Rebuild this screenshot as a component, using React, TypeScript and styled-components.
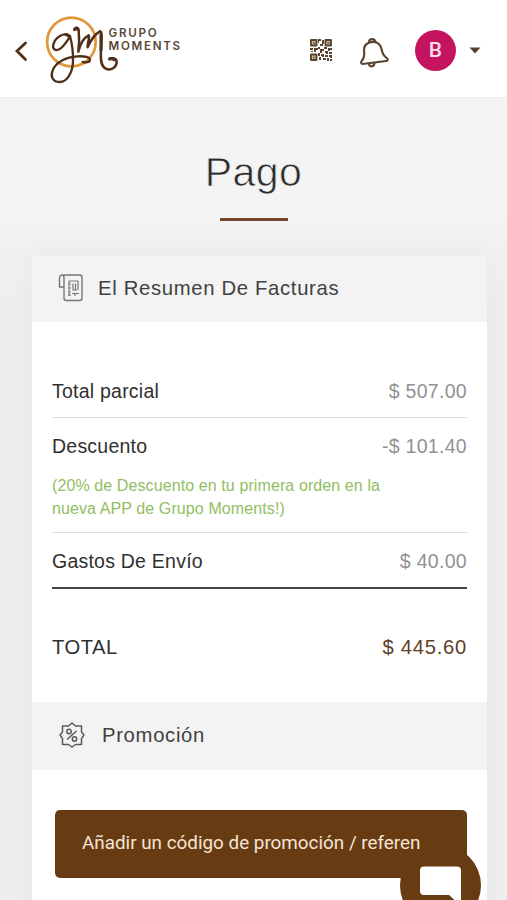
import React from 'react';
import styled, { createGlobalStyle } from 'styled-components';

const Global = createGlobalStyle`
  * { box-sizing: border-box; }
  html, body { margin: 0; height: 900px; overflow: hidden; }
  body { background: #eeeeee; font-family: "Liberation Sans", Arial, sans-serif; }
`;

const Page = styled.div`
  width: 507px;
  height: 900px;
  overflow: hidden;
  display: flex;
  flex-direction: column;
  background: linear-gradient(#f4f4f4 97px, #f4f4f4 215px, #f0f0f0 250px, #eeeeee 300px);
`;

const Header = styled.header`
  height: 97px;
  flex: none;
  background: #fff;
  box-shadow: 0 0 3px rgba(0, 0, 0, 0.06);
  display: flex;
  align-items: flex-start;
`;

const BackIcon = styled.svg`
  width: 14px;
  height: 22px;
  margin: 40px 0 0 14px;
`;

const Brand = styled.div`
  display: flex;
  margin: 12px 0 0 14px;
`;

const BrandMark = styled.svg`
  width: 78px;
  height: 76px;
`;

const BrandName = styled.div`
  display: flex;
  flex-direction: column;
  margin: 15px 0 0 -11.5px;
  font: 600 11.6px/13px Inter, sans-serif;
  color: #584638;
`;

const BrandWord = styled.span<{ $spacing: number }>`
  letter-spacing: ${(p) => p.$spacing}px;
`;

const Actions = styled.div`
  display: flex;
  align-items: flex-start;
  margin: 30px 26px 0 auto;
`;

const QrIcon = styled.svg`
  width: 22px;
  height: 22px;
  margin-top: 9px;
`;

const BellIcon = styled.svg`
  width: 29px;
  height: 30px;
  margin: 8px 0 0 28px;
`;

const Avatar = styled.div`
  width: 41px;
  height: 41px;
  margin-left: 26px;
  border-radius: 50%;
  background: #c4145f;
  color: #fbdcea;
  font: 500 21px/41px Roboto, sans-serif;
  text-align: center;
`;

const Caret = styled.svg`
  width: 12px;
  height: 7px;
  margin: 17px 0 0 13px;
`;

const TitleBlock = styled.section`
  height: 159px;
  flex: none;
  display: flex;
  flex-direction: column;
  align-items: center;
`;

const Title = styled.h1`
  margin: 51px 0 0;
  font-weight: 400;
  font-size: 41px;
  line-height: 48px;
  letter-spacing: 0.4px;
  color: #2c2c2c;
  -webkit-text-stroke: 0.75px #f4f4f4;
`;

const Rule = styled.div`
  width: 68px;
  height: 3px;
  margin-top: 22px;
  background: #70452a;
`;

const Card = styled.main`
  width: 455px;
  height: 700px;
  flex: none;
  margin-left: 32px;
  background: #fff;
  box-shadow: 0 0 24px rgba(0, 0, 0, 0.03);
`;

const SectionHeader = styled.h2<{ $height: number; $gap: number }>`
  margin: 0;
  height: ${(p) => p.$height}px;
  padding: 0 0 2px 26px;
  display: flex;
  align-items: center;
  gap: ${(p) => p.$gap}px;
  background: #f3f3f3;
  color: #414141;
  font-weight: 400;
  font-size: 20.3px;
  letter-spacing: 0.67px;
`;

const SectionIcon = styled.svg`
  width: 27px;
  height: 28px;
  flex: none;
`;

const Summary = styled.div`
  height: 380px;
  padding: 41px 20px 0;
`;

const Row = styled.div<{ $height: number; $line?: string }>`
  height: ${(p) => p.$height}px;
  padding-top: 16.5px;
  display: flex;
  flex-wrap: wrap;
  justify-content: space-between;
  align-content: flex-start;
  border-bottom: ${(p) => p.$line || 'none'};
`;

const Label = styled.span<{ $total?: boolean }>`
  font-size: ${(p) => (p.$total ? 20.2 : 19.5)}px;
  line-height: 23px;
  letter-spacing: ${(p) => (p.$total ? 0.5 : 0.23)}px;
  color: #303030;
`;

const Amount = styled.span<{ $total?: boolean }>`
  font-size: ${(p) => (p.$total ? 20.2 : 19.5)}px;
  line-height: 23px;
  letter-spacing: ${(p) => (p.$total ? 0.75 : 0.3)}px;
  color: ${(p) => (p.$total ? '#604028' : '#929292')};
`;

const Note = styled.p`
  width: 360px;
  margin: 16px 0 0;
  font-size: 16px;
  line-height: 23px;
  letter-spacing: 0.1px;
  color: #91be62;
`;

const TotalRow = styled(Row)`
  margin-top: 30px;
`;

const PromoButton = styled.button`
  display: block;
  width: 412px;
  height: 68px;
  margin: 40px 0 0 23px;
  padding: 0 45px 2px 27px;
  border: 0;
  border-radius: 5px;
  background: #683c12;
  color: #f6e4d5;
  font: 400 18.85px/24px Roboto, sans-serif;
  text-align: left;
  white-space: nowrap;
  overflow: hidden;
`;

const ChatButton = styled.button`
  position: fixed;
  left: 400px;
  top: 845px;
  width: 81px;
  height: 81px;
  padding: 0;
  border: 0;
  border-radius: 50%;
  background: #683c12;
`;

export default function App() {
  return (
    <>
      <Global />
      <Page>
        <Header>
          <BackIcon viewBox="0 0 14 22" fill="none" stroke="#503018" strokeWidth="2.8" strokeLinecap="round">
            <path d="M11.5 3 3 11l8.500 8.500" />
          </BackIcon>
          <Brand>
            <BrandMark viewBox="42 12 78 76" fill="none" strokeLinecap="round" strokeLinejoin="round">
              <circle cx="71.400" cy="42" r="24.300" stroke="#df983c" strokeWidth="2.700" />
              <g stroke="#513019" transform="translate(40 8) scale(.33333)">
                <path d="M86 83C72 72 46 88 40 109C36 129 54 131 66 118C76 107 85 95 90 84C95 103 100 130 99 160C98 193 82 223 58 222C37 221 31 204 38 187C48 162 78 147 112 145C134 144 151 147 150 156C149 163 137 164 128 162" strokeWidth="7" />
                <path d="M103 65C106 57 114 56 116 68C118 86 118 108 115 131C121 106 134 88 146 82C150 89 142 105 143 118C151 99 164 79 180 70C188 70 184 100 183 126C181 157 183 181 203 184C219 187 231 173 230 161C229 150 218 149 209 152" strokeWidth="7.500" />
                <path d="M78 80Q84 79 87 85M104 64Q110 58 114 64M183 80V125M209 153Q217 150 223 155" strokeWidth="9.500" />
              </g>
            </BrandMark>
            <BrandName>
              <BrandWord $spacing={1.75}>GRUPO</BrandWord>
              <BrandWord $spacing={1.72}>MOMENTS</BrandWord>
            </BrandName>
          </Brand>
          <Actions>
            <QrIcon viewBox="0 0 22 22" fill="#594630">
              <path d="M8 0h3v2H9v2H8zM12 1h2v4h-2zM10 5h3v2h-3zM0 9h3v2H0zM4 9h4v2H6v2H4zM8 8h2v2H8zM10 10h4v2h-2v2h-2zM14 8h3v2h-3zM18 9h4v2h-2v1h-2zM15 12h3v3h-2v-1h-1zM19 13h3v2h-3zM8 14h2v3H8zM11 15h3v3h-2v-1h-1zM15 16h3v2h-3zM19 16h3v3h-2v-1h-1zM9 18h2v3H9zM13 19h3v2h-3zM17 19h2v3h-2zM20 20h2v2h-2zM1 12h2v1H1z" />
              <path d="M1 1h5.500v5.500H1zM15.500 1H21v5.500h-5.500zM1 15.500h5.500V21H1z" fill="#c9b491" stroke="#594630" strokeWidth="1.900" strokeLinejoin="round" />
              <path d="M3 3h2v2H3zM17.500 3h2v2h-2zM3 17.500h2v2H3z" opacity=".55" />
            </QrIcon>
            <BellIcon viewBox="0 0 29 30" fill="none" stroke="#5a432e" strokeWidth="2.100" strokeLinecap="round" strokeLinejoin="round">
              <path d="M9.500 4.500C5 6 3.500 10 4.200 14c.4 5-.7 7-2.500 9-1 1.400-.7 3 .8 3L26 23c2.200-.3 2.200-2 .7-3-3-2-4.300-4.500-5-8.500C20.700 7 18 4.800 15.500 4.200c-2-.5-4-.3-6 .3Z" />
              <path d="M9 4c.2-3.800 5.800-3.800 6.500 0M9 26c.4 3.400 5 3.200 5.500-.8" />
            </BellIcon>
            <Avatar>B</Avatar>
            <Caret viewBox="0 0 12 7"><path d="M.5.5h11L6 6.500Z" fill="#5a412d" /></Caret>
          </Actions>
        </Header>
        <TitleBlock>
          <Title>Pago</Title>
          <Rule />
        </TitleBlock>
        <Card>
          <SectionHeader $height={66} $gap={13}>
            <SectionIcon viewBox="0 0 27 28" fill="none" stroke="#777" strokeWidth="1.400" strokeLinejoin="round">
              <path d="M4 1h17.500q2.500 0 2.500 2.500v20.500q0 2.500-2.500 2.500H8.500q-2.500 0-2.500-2.500V4Q6 1 4 1T1.500 4v9H6" />
              <path d="M11 22V7h9v9M11 10h2M11 14h2M11 18h2M15 9.500v7M17.500 9.500v6M15 16h4M14 19.500h7M17 19.500V22M10 21h3" strokeWidth="1.200" />
            </SectionIcon>
            El Resumen De Facturas
          </SectionHeader>
          <Summary>
            <Row $height={55} $line="1px solid #dedede"><Label>Total parcial</Label><Amount>$ 507.00</Amount></Row>
            <Row $height={115} $line="1px solid #dedede">
              <Label>Descuento</Label><Amount>-$ 101.40</Amount>
              <Note>(20% de Descuento en tu primera orden en la<br />nueva APP de Grupo Moments!)</Note>
            </Row>
            <Row $height={56} $line="2px solid #454545"><Label>Gastos De Envío</Label><Amount>$ 40.00</Amount></Row>
            <TotalRow $height={60}><Label $total>TOTAL</Label><Amount $total>$ 445.60</Amount></TotalRow>
          </Summary>
          <SectionHeader $height={68} $gap={17}>
            <SectionIcon viewBox="0 0 27 28" fill="none" stroke="#5b5b5b" strokeWidth="1.500" strokeLinejoin="round">
              <path d="m14 2 3.500 3h6v6l2.500 3-2.500 3.500v6h-6L14 26l-3.500-2.500h-6v-6L2 14l2.500-3V5h6Z" />
              <circle cx="11" cy="10.500" r="2.200" /><circle cx="16.500" cy="18" r="2.200" />
              <path d="m18.500 10-9.500 8.500" />
            </SectionIcon>
            Promoción
          </SectionHeader>
          <PromoButton>Añadir un código de promoción / referen</PromoButton>
        </Card>
        <ChatButton aria-label="Chat">
          <svg width="81" height="81" viewBox="0 0 81 81">
            <path d="M24 21.500h33q4 0 4 4V61L49 50H24q-4 0-4-4V25.500q0-4 4-4Z" fill="#fff" />
          </svg>
        </ChatButton>
      </Page>
    </>
  );
}
